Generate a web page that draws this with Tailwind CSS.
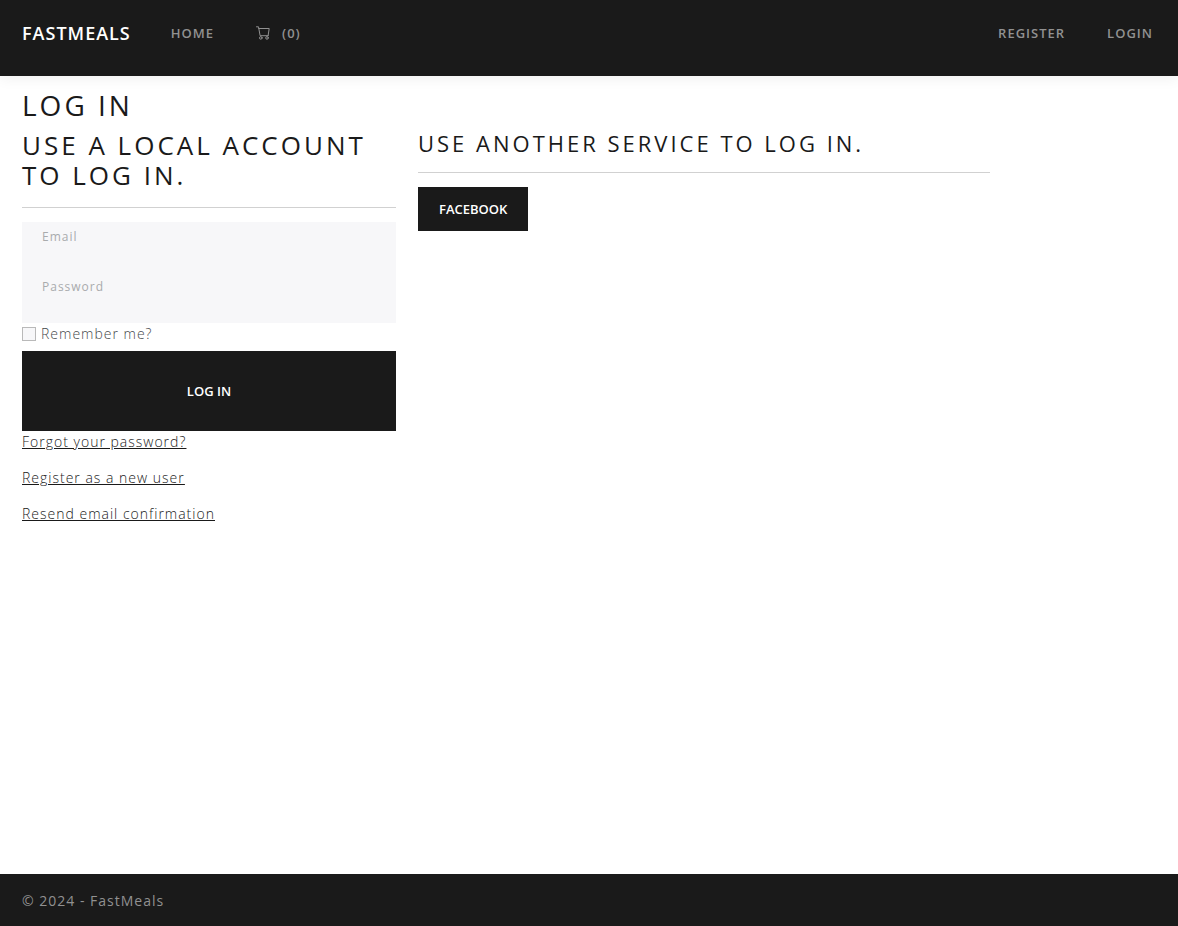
<!DOCTYPE html>
<html lang="en">
<head>
<meta charset="utf-8">
<meta name="viewport" content="width=device-width, initial-scale=1">
<title>Log in - FastMeals</title>
<script src="https://cdn.jsdelivr.net/npm/@tailwindcss/browser@4"></script>
</head>
<body class="flex min-h-screen flex-col overflow-x-hidden bg-white font-['Open_Sans',sans-serif] text-sm font-light tracking-[1px] text-[#45494c]">
  <header class="bg-[#1a1a1a] px-[22px] pt-[11px] pb-[21px] shadow-[0_4px_12px_rgba(0,0,0,0.05)]">
    <nav class="flex h-11 items-center text-[13px] font-semibold text-[#919191]">
      <a href="#" class="mr-10 text-lg text-white">FASTMEALS</a>
      <a href="#" class="mr-[42px]">HOME</a>
      <a href="#" class="flex items-center gap-3" aria-label="Shopping cart, 0 items">
        <svg class="size-[14px]" viewBox="0 0 14 14" fill="none" stroke="currentColor" stroke-linecap="round" stroke-linejoin="round" aria-hidden="true">
          <path d="M.5 .8h2l1.6 8.9h8M2.8 2.5h10.4l-1.1 7.2"/>
          <circle cx="4.8" cy="11.9" r="1.3"/>
          <circle cx="11" cy="11.9" r="1.3"/>
        </svg>
        <span>(0)</span>
      </a>
      <div class="mr-[3px] ml-auto flex gap-[42px]">
        <a href="#">REGISTER</a>
        <a href="#">LOGIN</a>
      </div>
    </nav>
  </header>

  <main class="flex-1 px-[22px] pt-[13px] pb-8">
    <h1 class="mb-2 text-[28px] leading-8 font-normal tracking-[3px] text-[#1a1a1a]">LOG IN</h1>
    <div class="-mr-8 grid grid-cols-12 items-start gap-x-[22px]">
      <section class="col-span-4 pt-px">
        <h2 class="text-[26px] leading-[30px] font-normal tracking-[3px] text-[#1a1a1a]">USE A LOCAL ACCOUNT TO LOG IN.</h2>
        <hr class="mt-[17px] mb-[14px] border-[#d1d1d1]">
        <form>
          <div class="relative h-[50px]">
            <input id="email" type="email" class="block size-full bg-[#f7f7f9] px-5 pt-5 text-xs outline-none">
            <label for="email" class="absolute top-1.5 left-5 text-xs leading-[18px] font-normal text-[#a9abad]">Email</label>
          </div>
          <div class="relative h-[51px]">
            <input id="password" type="password" class="block size-full bg-[#f7f7f9] px-5 pt-5 text-xs outline-none">
            <label for="password" class="absolute top-1.5 left-5 text-xs leading-[18px] font-normal text-[#a9abad]">Password</label>
          </div>
          <label class="mb-[7px] flex h-[21px] items-center gap-[5px]">
            <input type="checkbox" class="size-[14px] appearance-none border border-[#b9b9b9] bg-[#f7f7f9] checked:bg-[#1a1a1a]">
            Remember me?
          </label>
          <button type="submit" class="h-20 w-full bg-[#1a1a1a] text-[13px] font-semibold tracking-normal text-white">LOG IN</button>
          <div class="flex flex-col items-start gap-[15px] leading-[21px] text-[#1a1a1a] underline">
            <a href="#">Forgot your password?</a>
            <a href="#">Register as a new user</a>
            <a href="#">Resend email confirmation</a>
          </div>
        </form>
      </section>
      <section class="col-span-6 pt-px">
        <h3 class="text-[22px] leading-[26px] font-normal tracking-[3px] text-[#1a1a1a]">USE ANOTHER SERVICE TO LOG IN.</h3>
        <hr class="mt-4 mb-[14px] border-[#d1d1d1]">
        <button type="button" class="h-11 bg-[#1a1a1a] px-[21px] text-[13px] font-semibold tracking-normal text-white">FACEBOOK</button>
      </section>
    </div>
  </main>

  <footer class="bg-[#1a1a1a] px-[22px] pt-[17px] pb-[15px] leading-5 font-normal text-[#919191]">© 2024 - FastMeals</footer>
</body>
</html>
